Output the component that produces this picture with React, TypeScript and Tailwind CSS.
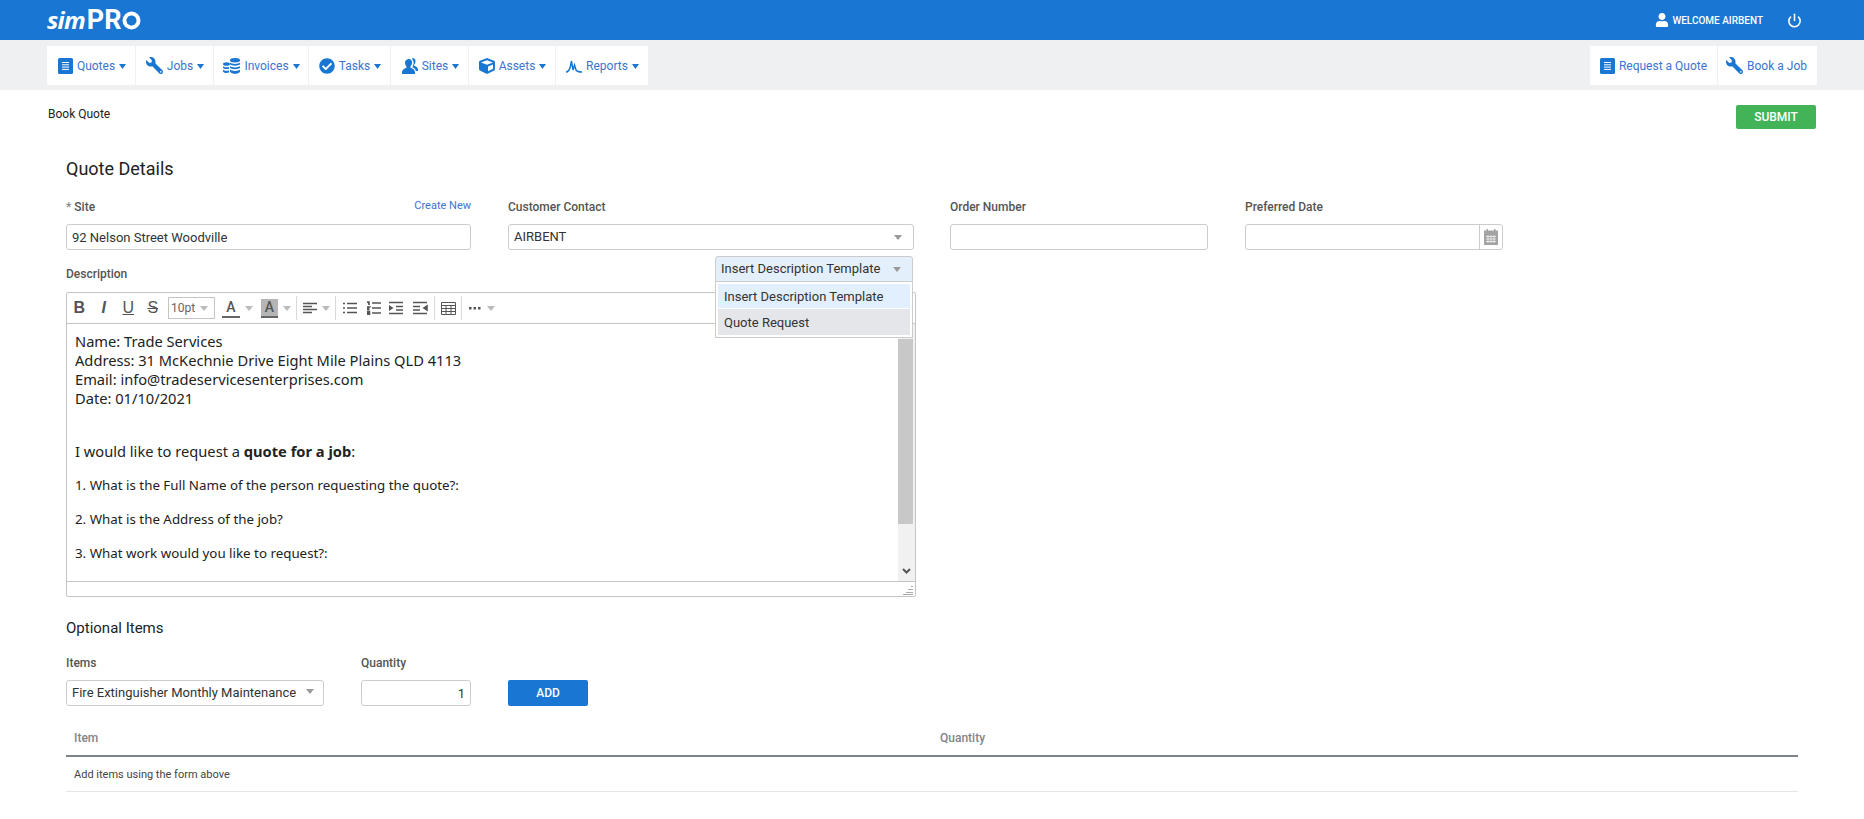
import { ReactNode } from 'react';
import { FaWrench, FaCheckCircle, FaCube, FaUser } from 'react-icons/fa';
import { Power } from 'lucide-react';

const roboto = { fontFamily: 'Roboto, "Liberation Sans", sans-serif' };

function DocIcon() {
  return (
    <svg width="15" height="16" viewBox="0 0 15 16">
      <rect x="0" y="0" width="15" height="16" rx="1.5" fill="#1976d2" />
      <path d="M4 4.500h7M4 6.800h7M4 9.100h7M4 11.400h7" stroke="#fff" strokeWidth="1" />
    </svg>
  );
}

function Wrench() {
  return <FaWrench className="h-[17px] w-[17px] -scale-x-100 text-[#1976d2]" />;
}

function CoinsIcon() {
  return (
    <svg width="17" height="16" viewBox="0 0 17 16" fill="#1976d2">
      <ellipse cx="12" cy="2.200" rx="5" ry="2.200" />
      <path d="M7 4.500c1 1 3 1.400 5 1.400s4-.4 5-1.400v1.800c-1 1-3 1.400-5 1.400S8 7.300 7 6.300zM7 8c1 1 3 1.400 5 1.400S16 9 17 8v1.800c-1 1-3 1.400-5 1.400S8 10.800 7 9.800zM7 11.500c1 1 3 1.400 5 1.400s4-.4 5-1.400v2.300c-1 1.400-3 2-5 2s-4-.6-5-2z" />
      <ellipse cx="3.500" cy="6" rx="3.500" ry="1.800" />
      <path d="M0 8.200c.8.800 2 1.100 3.500 1.100.9 0 1.700-.1 2.500-.4v1.800c-.8.300-1.600.4-2.500.4-1.500 0-2.700-.3-3.500-1.100zM0 11.700c.8.800 2 1.100 3.500 1.100.9 0 1.700-.1 2.500-.4v2.200c-.8.300-1.600.4-2.500.4-1.500 0-2.700-.4-3.500-1.300z" />
    </svg>
  );
}

function SitesIcon() {
  return (
    <svg width="17" height="16" viewBox="0 0 17 16" fill="#1976d2">
      <path d="M8 1c2 0 3 1.500 3 3.500 0 1.800-.8 3.200-1.500 4v1.200C11.500 10.500 14 11.500 14 14.500V16H1v-1.500c0-3 2.500-4 4.500-4.800V8.500C4.800 7.700 4 6.300 4 4.500 4 2.500 6 1 8 1z" />
      <path d="M11.500 0c2 0 3 1.400 3 3.200 0 1.600-.7 2.800-1.400 3.500v1.100c1.600.6 3.900 1.400 3.900 4V13h-2c-.5-2-2.200-3-3.600-3.700V8.800c.8-1 1.200-2.600 1.200-4.300 0-1.500-.6-2.800-1.700-3.600.5-.6 1-.9.600-.9z" />
    </svg>
  );
}

function ReportsIcon() {
  return (
    <svg width="16" height="16" viewBox="0 0 16 16" fill="none" stroke="#1976d2" strokeWidth="1.500">
      <path d="M0 14c2.500 0 3.500-1.500 4.500-6L5.500 3l1.500 9 1.500-5 1.500 5c1 1.500 3 2 6 2" />
    </svg>
  );
}

function Tri({ className }: { className: string }) {
  return (
    <svg width="8" height="5" viewBox="0 0 8 5" className={`shrink-0 ${className}`}>
      <path d="M0 0h8L4 5z" fill="currentColor" />
    </svg>
  );
}

function NavItem({ icon, label, w, caret = true }: { icon: ReactNode; label: string; w: string; caret?: boolean }) {
  return (
    <a className={`flex h-full items-center justify-center gap-[4px] bg-white text-[12px] text-[#3b74d1] ${w}`}>
      {icon}
      <span>{label}</span>
      {caret && (
        <svg width="7" height="5" viewBox="0 0 7 5" className="mt-[2px] shrink-0 text-[#1976d2]">
          <path d="M0 0h7L3.500 5z" fill="currentColor" />
        </svg>
      )}
    </a>
  );
}

function Label({ children }: { children: ReactNode }) {
  return <label className="block text-[12px] font-medium leading-[14px] text-[#555]">{children}</label>;
}

const inputCls = 'h-[26px] w-full rounded-[3px] border border-[#ccc] bg-white px-[5px] text-[13px] text-[#333] outline-none';

function ToolSep({ className }: { className: string }) {
  return <span className={`h-[24px] w-px shrink-0 bg-[#d9d9d9] ${className}`} />;
}

function TextIcon({ children, className }: { children: ReactNode; className: string }) {
  return (
    <span
      className={`flex h-[22px] w-[24.5px] items-center justify-center text-[16px] text-[#555] ${className}`}
      style={{ fontFamily: '"Liberation Sans", sans-serif' }}
    >
      {children}
    </span>
  );
}

function Bars({ d, className }: { d: string; className: string }) {
  return (
    <svg width="15" height="14" viewBox="0 0 15 14" className={`shrink-0 ${className}`} stroke="#555" strokeWidth="1.600" fill="#555">
      <path d={d} />
    </svg>
  );
}

function Toolbar() {
  return (
    <div className="flex h-[31px] items-center border-b border-[#c5c5c5]">
      <TextIcon className="font-bold">B</TextIcon>
      <TextIcon className="font-bold italic">I</TextIcon>
      <TextIcon className="underline">U</TextIcon>
      <TextIcon className="line-through">S</TextIcon>
      <div className="ml-[3px] flex h-[22px] w-[47px] items-center justify-between border border-[#c5c5c5] pl-[2px] pr-[6px] text-[12px] text-[#666]">
        10pt
        <Tri className="text-[#bbb]" />
      </div>
      <span className="ml-[7px] flex h-[19px] w-[18px] items-center justify-center border-b-2 border-[#666] text-[14px] font-medium text-[#555]">A</span>
      <Tri className="ml-[5px] text-[#bbb]" />
      <span className="ml-[8px] flex h-[19px] w-[17px] items-center justify-center border-b-2 border-[#666] bg-[#b5b5b5] text-[14px] font-medium text-[#555]">A</span>
      <Tri className="ml-[5px] text-[#bbb]" />
      <ToolSep className="ml-[5px]" />
      <Bars className="ml-[6px]" d="M0 2.500h14M0 5.500h9M0 8.500h14M0 11.500h9" />
      <Tri className="ml-[4px] text-[#bbb]" />
      <ToolSep className="ml-[5px]" />
      <Bars className="ml-[7px]" d="M4 2.500h10M4 7h10M4 11.500h10M0 2.500h2M0 7h2M0 11.500h2" />
      <Bars className="ml-[9px]" d="M5 2h9M5 7h9M5 12h9M0 1h2v3M0 6h2.500L0 8.500h2.500M0 10.500h2.500v3H0" />
      <Bars className="ml-[7px]" d="M0 1.500h14M7 5.500h7M7 9h7M0 12.500h14M0 5l3 2-3 2z" />
      <Bars className="ml-[9px]" d="M0 1.500h14M0 5.500h7M0 9h7M0 12.500h14M14 5l-3 2 3 2z" />
      <ToolSep className="ml-[6px]" />
      <svg width="15" height="13" viewBox="0 0 15 13" className="ml-[6px] shrink-0" fill="none" stroke="#555">
        <path d="M.5.500h14v12H.5zM.5 3.500h14M.5 6.500h14M.5 9.500h14M5 3.500v9M10 3.500v9" />
      </svg>
      <ToolSep className="ml-[5px]" />
      <svg width="12" height="4" viewBox="0 0 12 4" className="ml-[7px]" fill="#555">
        <rect y="1" width="2.500" height="2.500" />
        <rect x="4.500" y="1" width="2.500" height="2.500" />
        <rect x="9" y="1" width="2.500" height="2.500" />
      </svg>
      <Tri className="ml-[6px] text-[#bbb]" />
    </div>
  );
}

function EditorBody() {
  return (
    <div className="flex h-[258px] border-b border-[#c5c5c5]">
      <div className="flex-1 pl-[8px] pt-[8px] text-[#222]" style={{ fontFamily: '"Noto Sans", sans-serif' }}>
        <div className="text-[14.67px] leading-[19px]">
          <p>Name: Trade Services</p>
          <p>Address: 31 McKechnie Drive Eight Mile Plains QLD 4113</p>
          <p>Email: info@tradeservicesenterprises.com</p>
          <p>Date: 01/10/2021</p>
        </div>
        <p className="mt-[34px] text-[14.67px] leading-[19px]">
          I would like to request a <strong>quote for a job</strong>:
        </p>
        <p className="mt-[15px] text-[13.33px] leading-[19px]">1. What is the Full Name of the person requesting the quote?:</p>
        <p className="mt-[15px] text-[13.33px] leading-[19px]">2. What is the Address of the job?</p>
        <p className="mt-[15px] text-[13.33px] leading-[19px]">3. What work would you like to request?:</p>
      </div>
      <div className="flex w-[17px] flex-col items-center bg-[#f1f1f1]">
        <div className="ml-[-2px] mt-[15px] h-[185px] w-[15px] bg-[#c8c8c8]" />
        <svg width="9" height="6" viewBox="0 0 9 6" className="mt-[44px]" fill="none" stroke="#555" strokeWidth="2">
          <path d="M1 1l3.500 3.500L8 1" />
        </svg>
      </div>
    </div>
  );
}

function Logo() {
  return (
    <div className="flex items-baseline text-white" aria-label="simPRO">
      <span className="text-[24px] font-bold italic leading-none tracking-[-0.8px]" style={{ fontFamily: '"Open Sans", sans-serif' }}>sim</span>
      <span className="ml-[2px] text-[27px] font-bold leading-none">PR</span>
      <svg width="19" height="19" viewBox="0 0 19 19" className="self-center">
        <circle cx="9.500" cy="9.500" r="7" fill="none" stroke="#fff" strokeWidth="4" />
        <path d="M9.500 5l1.500 1.500 2-.3.400 2 1 1.800-1.400 1.500-.2 2-2 .2-1.800 1-1.500-1.300-2-.3v-2L4.500 9l1.500-1.500.3-2 2 .2z" fill="#1976d2" />
      </svg>
    </div>
  );
}

export default function App() {
  return (
    <div className="h-[819px] overflow-hidden bg-white" style={roboto}>
      <header className="flex h-10 items-center justify-between bg-[#1976d2] pl-[47px] pr-[62px] text-white">
        <Logo />
        <div className="flex items-center">
          <FaUser className="h-[14px] w-[14px]" />
          <span className="ml-[3px] text-[10px] font-medium">WELCOME AIRBENT</span>
          <Power className="ml-[24px] h-[15px] w-[15px]" strokeWidth={2.5} />
        </div>
      </header>

      <nav className="flex h-[50px] justify-between bg-[#eff0f2] px-[47px] pb-[5px] pt-[6px]">
        <div className="flex gap-px">
          <NavItem w="w-[88px] pl-[2px]" label="Quotes" icon={<DocIcon />} />
          <NavItem w="w-[77px] pl-[1px]" label="Jobs" icon={<Wrench />} />
          <NavItem w="w-[94px] pl-[1px]" label="Invoices" icon={<CoinsIcon />} />
          <NavItem w="w-[81px] pl-[1px]" label="Tasks" icon={<FaCheckCircle className="h-[16px] w-[16px] text-[#1976d2]" />} />
          <NavItem w="w-[77px] pl-[1px]" label="Sites" icon={<SitesIcon />} />
          <NavItem w="w-[86px] pl-[1px]" label="Assets" icon={<FaCube className="h-[16px] w-[16px] text-[#1976d2]" />} />
          <NavItem w="w-[92px] pl-[1px]" label="Reports" icon={<ReportsIcon />} />
        </div>
        <div className="flex gap-px">
          <NavItem w="w-[127px]" label="Request a Quote" caret={false} icon={<DocIcon />} />
          <NavItem w="w-[99px] pr-[2px]" label="Book a Job" caret={false} icon={<Wrench />} />
        </div>
      </nav>

      <main className="px-[48px]">
        <div className="flex items-center justify-between pt-[15px]">
          <span className="mb-[6px] text-[12px] text-[#222]">Book Quote</span>
          <button className="h-[24px] w-[80px] rounded-[2px] bg-[#43b358] text-[12px] font-medium text-white">SUBMIT</button>
        </div>

        <section className="mx-[18px]">
          <h2 className="mt-[29px] text-[18px] leading-[22px] text-[#222]">Quote Details</h2>

          <div className="mt-[20px] flex">
            <div className="w-[405px]">
              <div className="flex h-[24px] items-start justify-between">
                <Label><span className="text-[#888]">* </span>Site</Label>
                <a className="-mt-[1px] text-[11px] leading-[14px] text-[#3b74d1]">Create New</a>
              </div>
              <input readOnly className={inputCls} defaultValue="92 Nelson Street Woodville" />
            </div>
            <div className="ml-[37px] w-[406px]">
              <div className="h-[24px]"><Label>Customer Contact</Label></div>
              <div className={`${inputCls} flex items-center justify-between pr-[11px]`}>
                AIRBENT
                <Tri className="text-[#999]" />
              </div>
            </div>
            <div className="ml-[36px] w-[258px]">
              <div className="h-[24px]"><Label>Order Number</Label></div>
              <input readOnly className={inputCls} />
            </div>
            <div className="ml-[37px] w-[258px]">
              <div className="h-[24px]"><Label>Preferred Date</Label></div>
              <div className={`${inputCls} flex justify-end !p-0`}>
                <span className="flex w-[23px] items-center justify-center border-l border-[#ccc]">
                  <svg width="14" height="16" viewBox="0 0 14 16">
                    <path d="M0 1.500h2.500V0h1.500v1.500h6V0h1.500v1.500H14V16H0z" fill="#a3a3a3" />
                    <path d="M2 7.500h10M2 10h10M2 12.500h10M4 6v8M7 6v8M10 6v8" stroke="#e5e5e5" strokeWidth="1" />
                  </svg>
                </span>
              </div>
            </div>
          </div>

          <div className="mt-[6px] flex h-[36px] w-[850px] justify-between">
            <div className="pt-[11px]"><Label>Description</Label></div>
            <div className="relative z-10 mr-[3px] w-[198px]">
              <div className="flex h-[26px] items-center justify-between rounded-t-[3px] border border-[#ccc] bg-[#e3f0fc] pl-[5px] pr-[11px] text-[13px] text-[#333]">
                Insert Description Template
                <Tri className="text-[#999]" />
              </div>
              <ul className="absolute left-0 top-[26px] w-full border border-t-0 border-[#ccc] bg-white p-[2px] text-[13px] text-[#333]">
                <li className="flex h-[24px] items-center bg-[#e1effe] px-[6px] pt-px">Insert Description Template</li>
                <li className="mt-px flex h-[26px] items-center bg-[#e5e6e9] px-[6px] pt-px">Quote Request</li>
              </ul>
            </div>
          </div>

          <div className="w-[850px] rounded-[2px] border border-[#c5c5c5]">
            <Toolbar />
            <EditorBody />
            <div className="flex h-[14px] items-end justify-end pb-[1px] pr-[2px]">
              <svg width="10" height="10" viewBox="0 0 10 10" stroke="#aaa" strokeWidth="1">
                <path d="M8 1.500h2M5 4.500h5M3 7.500h7M0 9.500h10" />
              </svg>
            </div>
          </div>

          <h3 className="mt-[22px] text-[15px] leading-[18px] text-[#222]">Optional Items</h3>

          <div className="mt-[19px] flex items-start">
            <div className="w-[258px]">
              <div className="h-[24px]"><Label>Items</Label></div>
              <div className={`${inputCls} flex items-center justify-between pr-[9px]`}>
                Fire Extinguisher Monthly Maintenance
                <Tri className="mb-[3px] text-[#999]" />
              </div>
            </div>
            <div className="ml-[37px] w-[110px]">
              <div className="h-[24px]"><Label>Quantity</Label></div>
              <input readOnly className={`${inputCls} text-right`} defaultValue="1" />
            </div>
            <button className="ml-[37px] mt-[24px] h-[26px] w-[80px] rounded-[2px] bg-[#1976d2] text-[12px] font-medium text-white">ADD</button>
          </div>

          <table className="mt-[16px] w-full text-[12px]">
            <thead>
              <tr className="h-[34px] border-b-2 border-[#7e8387] text-left text-[#808589]">
                <th className="w-[874px] pb-[2px] pl-[8px] font-medium">Item</th>
                <th className="pb-[2px] font-medium">Quantity</th>
              </tr>
            </thead>
            <tbody>
              <tr className="h-[35px] border-b border-[#e5e5e5] text-[11px] text-[#444]">
                <td className="pl-[8px] pt-[3px]" colSpan={2}>Add items using the form above</td>
              </tr>
            </tbody>
          </table>
        </section>
      </main>
    </div>
  );
}
